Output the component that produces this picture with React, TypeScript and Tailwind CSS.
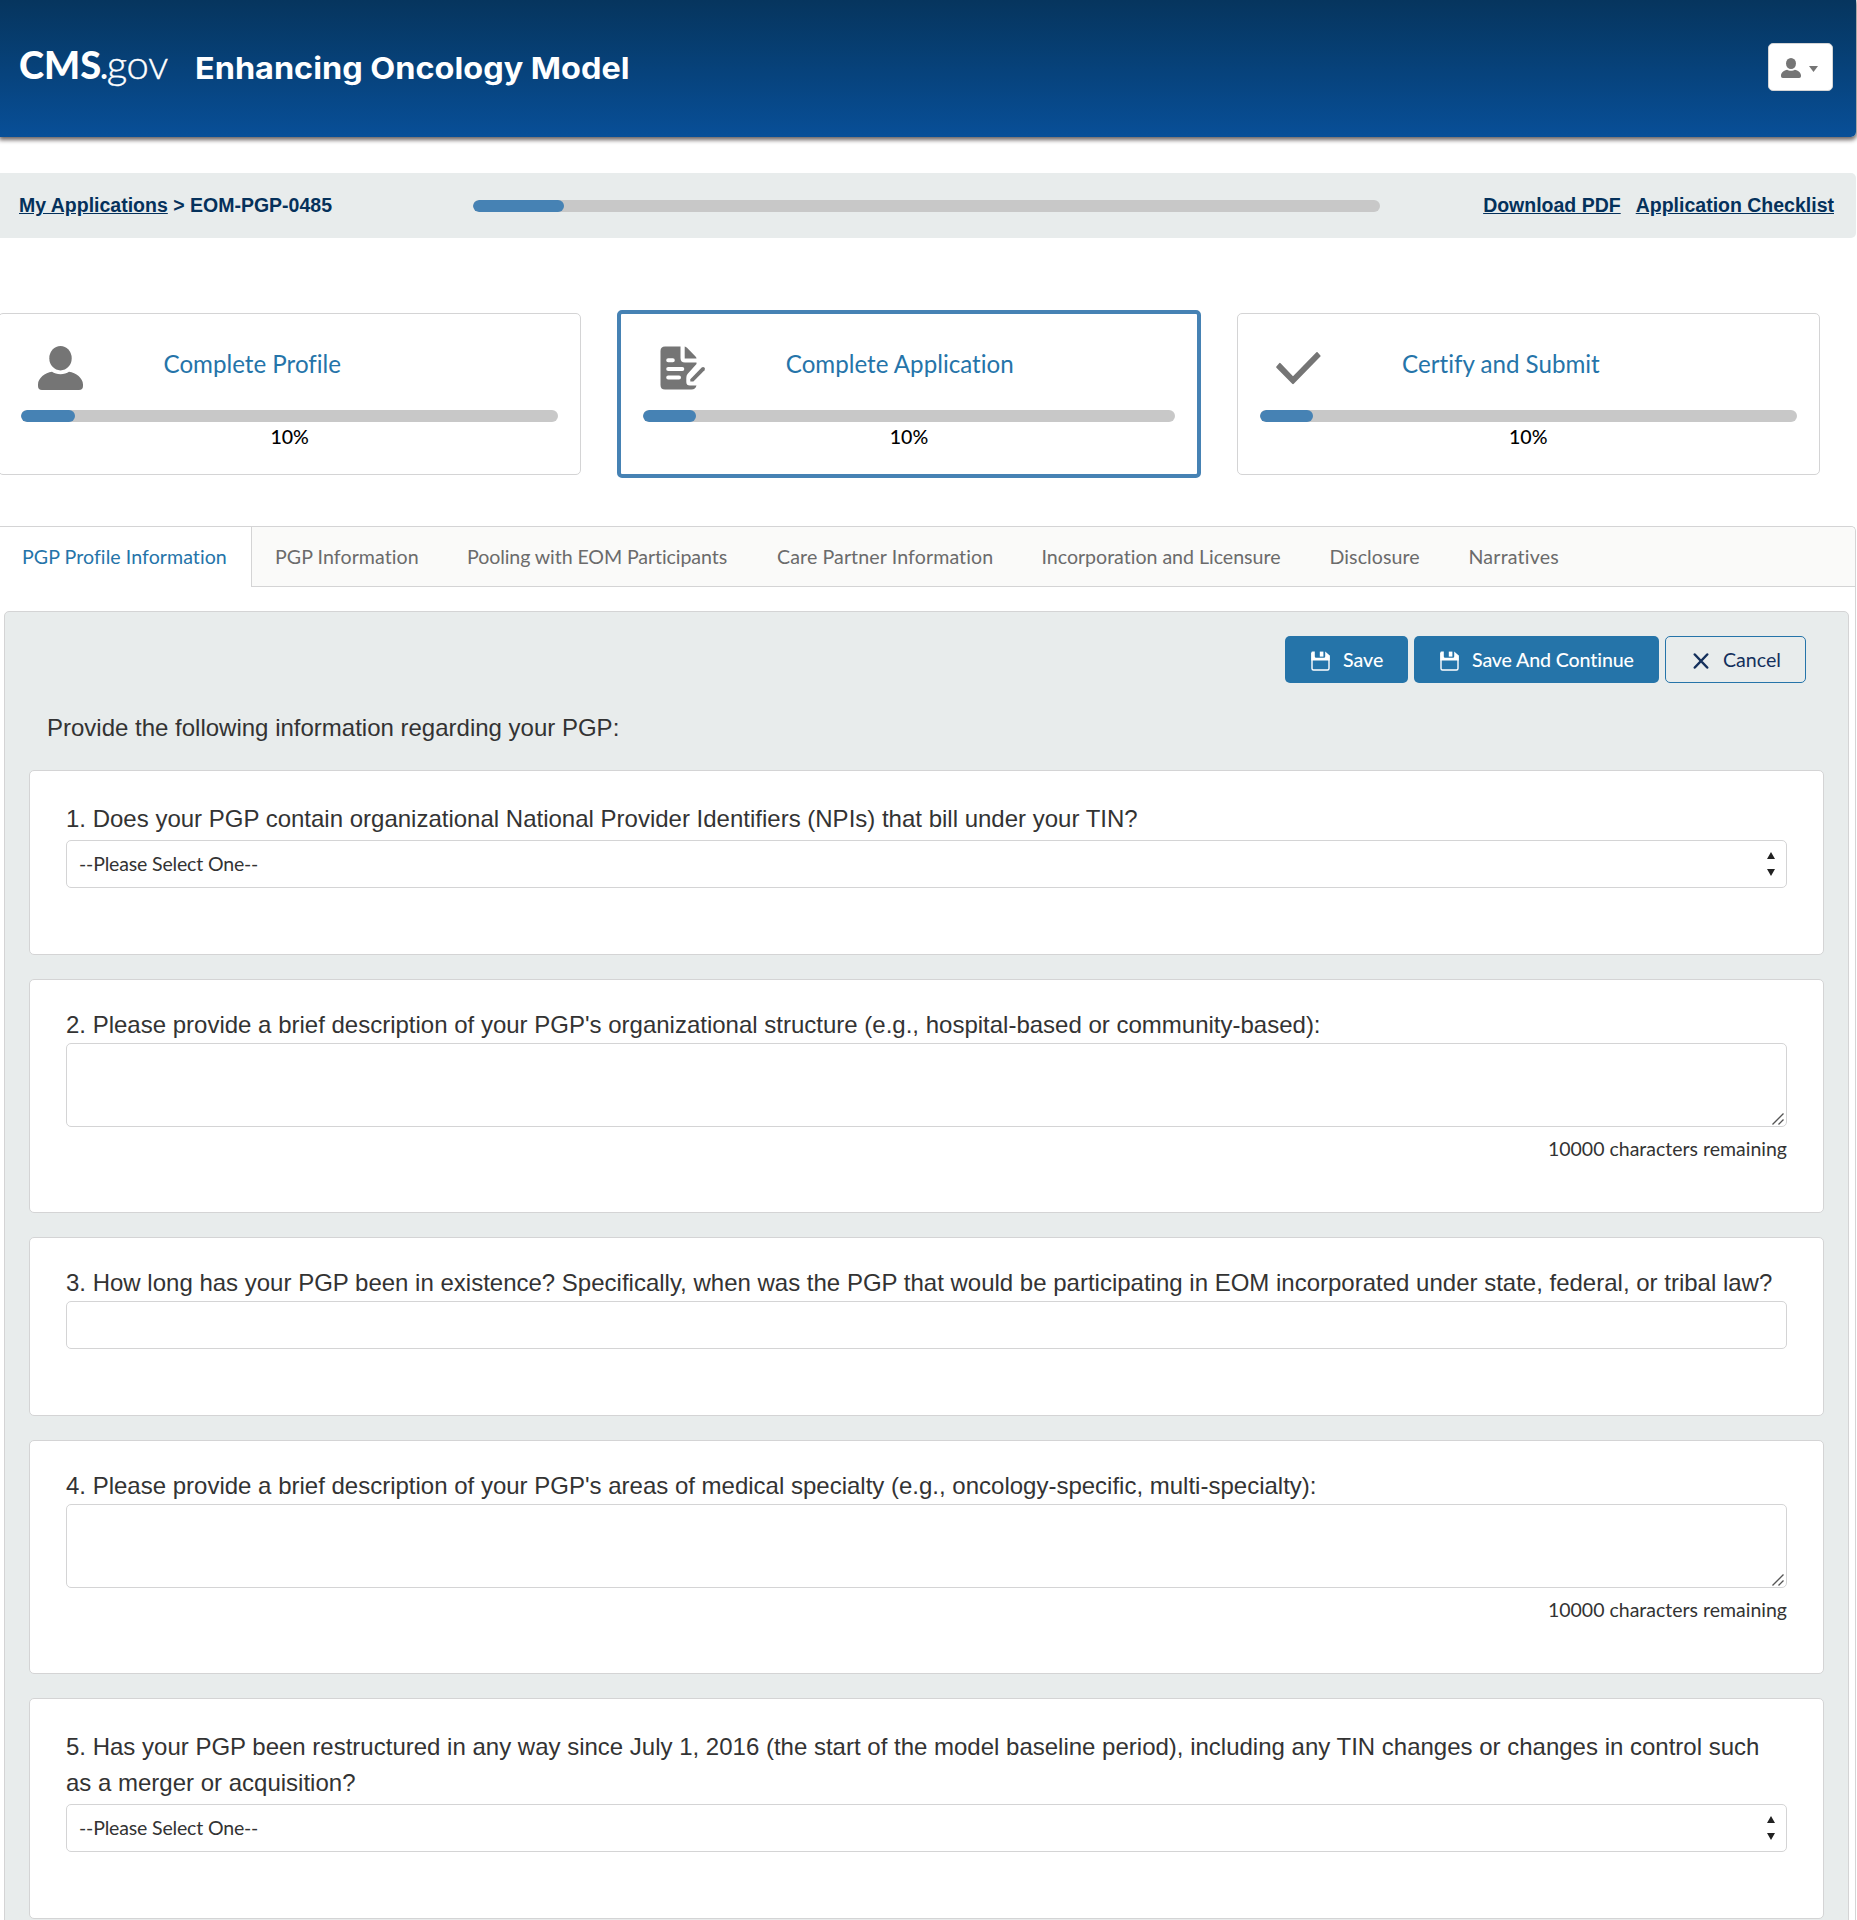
import React from 'react';

const LATO = "font-['Lato',sans-serif]";
const ARIAL = "font-['Liberation_Sans',Arial,sans-serif]";

function UserIcon({ className }: { className: string }) {
  return (
    <svg viewBox="0 0 45 44" className={className} fill="currentColor" preserveAspectRatio="none">
      <ellipse cx="22.5" cy="12.2" rx="11.2" ry="12.2" />
      <path d="M14 25.8 C18 29 27 29 31 25.8 C38 27 45 32 45 38.5 V40 Q45 44 41 44 H4 Q0 44 0 40 V38.5 C0 32 7 27 14 25.8 Z" />
    </svg>
  );
}

function FileEditIcon({ className }: { className: string }) {
  return (
    <svg viewBox="0 0 46 44" className={className}>
      <path
        fill="currentColor"
        d="M5 0.5 H20.5 V12 Q20.5 16.5 25 16.5 H36.5 V18 L27.5 28 Q26.3 29.5 26.3 32 V36 Q26.3 39.5 30 39.5 H36.5 Q35.5 43.5 31.5 43.5 H5 Q0.5 43.5 0.5 39 V5 Q0.5 0.5 5 0.5 Z"
      />
      <path fill="currentColor" d="M24.7 0.5 Q26 0.7 27 1.8 L35.5 10.5 Q36.5 11.5 36.5 12.4 H24.7 Z" />
      <path fill="currentColor" d="M30.3 33.2 L41.7 21.4 Q43.2 20.4 44.4 21.5 Q45.6 22.8 44.5 24.2 L33.4 35.4 L30.3 35.6 Z" />
      <path d="M8.2 14.2 H12.8 M8.2 23 H22.3 M8.2 31.4 H19" stroke="#fff" strokeWidth="4" strokeLinecap="round" />
    </svg>
  );
}

function CheckIcon({ className }: { className: string }) {
  return (
    <svg viewBox="0 0 45 44" className={className} fill="currentColor">
      <path d="M0.4 20.5 L3.4 17.1 Q4 16.6 4.6 17.2 L17 30.3 L40.4 6.2 Q41 5.6 41.6 6.2 L44.4 9.4 Q44.9 10 44.4 10.6 L17.8 37.8 Q17 38.5 16.2 37.8 L0.4 21.7 Q-0.1 21.1 0.4 20.5 Z" />
    </svg>
  );
}

function SaveIcon() {
  return (
    <svg viewBox="0 0 19 20" className="mt-[2px] h-[20px] w-[19px] shrink-0">
      <path d="M1 2 V17.5 Q1 19 2.5 19 H16.5 Q18 19 18 17.5 V4.5" fill="none" stroke="#fff" strokeWidth="1.4" />
      <path
        d="M0.3 2 Q0.3 0.6 1.6 0.6 H3.8 V5.5 Q3.8 6.8 5.1 6.8 H12.9 Q14.2 6.8 14.2 5.5 V0.6 L18.7 4.6 V9.4 H0.3 Z"
        fill="#fff"
      />
      <rect x="8.8" y="0.6" width="3.6" height="5" fill="#fff" />
    </svg>
  );
}

function CloseIcon() {
  return (
    <svg viewBox="0 0 16 16" className="mt-[2px] h-[16px] w-[16px] shrink-0">
      <path d="M1.8 1.5 L14.2 14.5 M14.2 1.5 L1.8 14.5" stroke="#14305c" strokeWidth="2.5" strokeLinecap="round" />
    </svg>
  );
}

function Progress({ className }: { className: string }) {
  return (
    <div className={`h-[12px] overflow-hidden rounded-full bg-[#c8c8c8] ${className}`}>
      <div className="h-full w-1/10 rounded-full bg-[#4682b4]" />
    </div>
  );
}

function StepCard({ title, icon, active }: { title: string; icon: React.ReactNode; active?: boolean }) {
  return (
    <div
      className={`w-[583.3px] shrink-0 rounded-[5px] bg-white px-[22px] pt-[32px] ${
        active ? '-my-[3px] h-[168px] border-4 border-[#4682b4]' : 'h-[162px] border border-[#d4d4d5]'
      }`}
    >
      <div className="flex h-[64px]">
        <div className="w-[142.5px] pl-[16.6px] text-[#757575]">{icon}</div>
        <div className="text-[24.15px] leading-[36px] text-[#2574a9]">{title}</div>
      </div>
      <Progress className="w-full" />
      <div className="text-center text-[19.6px] font-medium leading-[30px] text-black">10%</div>
    </div>
  );
}

function SelectBox() {
  return (
    <div className={`flex h-[48px] items-center justify-between rounded-[5px] border border-[#d4d4d5] pr-[11px] pl-[12px] text-[19.5px] tracking-[-0.16px] text-[#333] ${LATO}`}>
      <span>--Please Select One--</span>
      <svg viewBox="0 0 8 24" className="h-[24px] w-[8px]" fill="#222">
        <path d="M4 0 L8 7 H0 Z M0 17 H8 L4 24 Z" />
      </svg>
    </div>
  );
}

function TextAreaBox() {
  return (
    <>
      <div className="flex h-[84px] items-end justify-end rounded-[5px] border border-[#d4d4d5] pr-[2px] pb-px">
        <svg viewBox="0 0 12 12" className="h-[12px] w-[12px]">
          <path d="M0.5 11.5 L11.5 0.5 M6.5 11.5 L11.5 6.5" stroke="#555" strokeWidth="1.3" />
        </svg>
      </div>
      <div className={`mt-[5px] text-right text-[19.5px] leading-[34px] text-[#333] ${LATO}`}>10000 characters remaining</div>
    </>
  );
}

function Question({ text, kind, height }: { text: string; kind: 'select' | 'textarea' | 'input'; height: string }) {
  const select = kind === 'select';
  return (
    <div className={`mb-[24px] rounded-[5px] border border-[#d4d4d5] bg-white px-[36px] ${height} ${select ? 'pt-[30px]' : 'pt-[27px]'}`}>
      <div className={`text-[24px] leading-[36px] text-[#333] ${ARIAL} ${select ? 'mb-[3px]' : ''}`}>{text}</div>
      {select && <SelectBox />}
      {kind === 'textarea' && <TextAreaBox />}
      {kind === 'input' && <div className="h-[48px] rounded-[5px] border border-[#d4d4d5]" />}
    </div>
  );
}

const tabs = [
  { label: 'PGP Information', style: 'w-[192px] tracking-[0.07px]' },
  { label: 'Pooling with EOM Participants', style: 'w-[310px] tracking-[-0.09px]' },
  { label: 'Care Partner Information', style: 'w-[264.5px] tracking-[0.11px]' },
  { label: 'Incorporation and Licensure', style: 'w-[288px] tracking-[-0.02px]' },
  { label: 'Disclosure', style: 'w-[139px] tracking-[0.08px]' },
  { label: 'Narratives', style: 'tracking-[0.2px]' },
];

export default function App() {
  return (
    <div className={`h-[1920px] w-[1857px] overflow-hidden bg-white pr-px ${LATO} [font-variant-ligatures:no-common-ligatures]`}>
      <header className="flex h-[137px] items-start justify-between rounded-br-[5px] bg-linear-to-b from-[#06355e] to-[#084f98] pr-[23px] pl-[19px] shadow-[0_2px_4px_1px_rgba(60,50,50,0.75)]">
        <div className="flex text-white">
          <div className="mt-[34px] flex w-[176px] items-baseline leading-[60px]">
            <span className="text-[38px] font-black">CMS</span>
            <span className="-ml-px text-[32px] font-bold">.</span>
            <span className="-ml-px text-[40px] font-light tracking-[-0.3px] [-webkit-text-stroke:0.4px_white]">gov</span>
          </div>
          <h1 className="mt-[44px] origin-left scale-x-[1.081] whitespace-nowrap font-['Inter',sans-serif] text-[30px] leading-[48px] font-bold">
            Enhancing Oncology Model
          </h1>
        </div>
        <button className="mt-[43px] flex h-[48px] w-[65px] items-center rounded-[5px] border border-[#d4d4d5] bg-white pl-[12px] text-[#757575]">
          <UserIcon className="mt-[2px] h-[20px] w-[20px]" />
          <svg viewBox="0 0 9 6" className="ml-[8px] mt-[3px] h-[6px] w-[9px]" fill="currentColor">
            <path d="M0 0 H9 L4.5 6 Z" />
          </svg>
        </button>
      </header>

      <div className={`mt-[36px] flex h-[65px] items-center rounded-r-[5px] bg-[#e8ecec] pr-[22px] pl-[19px] text-[19.5px] font-bold text-[#05315b] ${ARIAL}`}>
        <div className="w-[454px]">
          <a className="underline">My Applications</a> &gt; EOM-PGP-0485
        </div>
        <Progress className="mt-px w-[907px]" />
        <div className="ml-auto flex gap-[15px]">
          <a className="underline">Download PDF</a>
          <a className="underline">Application Checklist</a>
        </div>
      </div>

      <div className="-ml-[2px] mt-[75px] flex gap-[36px]">
        <StepCard title="Complete Profile" icon={<UserIcon className="h-[44px] w-[45px]" />} />
        <StepCard title="Complete Application" active icon={<FileEditIcon className="h-[44px] w-[46px]" />} />
        <StepCard title="Certify and Submit" icon={<CheckIcon className="h-[44px] w-[45px]" />} />
      </div>

      <div className="mt-[51px] h-[1394px] rounded-tr-[5px] border-t border-r border-[#d4d4d5]">
        <nav className="flex h-[60px] rounded-tr-[5px] bg-[#fafaf9] text-[19.6px] text-[#6b6b6b]">
          <div className="flex w-[252px] items-center border-r border-[#d4d4d5] bg-white pl-[22px] tracking-[0.06px] text-[#2574a9]">
            PGP Profile Information
          </div>
          <div className="flex flex-1 items-center border-b border-[#d4d4d5] pl-[23px]">
            {tabs.map((tab) => (
              <span key={tab.label} className={`shrink-0 whitespace-nowrap ${tab.style}`}>
                {tab.label}
              </span>
            ))}
          </div>
        </nav>

        <section className="ml-[4px] mr-[6px] mt-[24px] h-[1400px] rounded-t-[5px] border border-[#d4d4d5] bg-[#e8ecec] px-[24px] pt-[24px]">
          <div className="flex justify-end gap-[6px] pr-[18px] text-[19.6px] leading-[24px]">
            <button className="flex h-[47px] w-[123px] items-center gap-[13px] rounded-[5px] bg-[#2574a9] pl-[26px] font-medium text-white">
              <SaveIcon />
              Save
            </button>
            <button className="flex h-[47px] w-[245px] items-center gap-[13px] rounded-[5px] bg-[#2574a9] pl-[26px] font-medium tracking-[-0.12px] whitespace-nowrap text-white">
              <SaveIcon />
              Save And Continue
            </button>
            <button className="flex h-[47px] w-[141px] items-center gap-[14px] rounded-[5px] border border-[#2574a9] pl-[27px] text-[#14305c]">
              <CloseIcon />
              Cancel
            </button>
          </div>
          <p className={`mt-[27px] mb-[24px] pl-[18px] text-[24px] leading-[36px] text-[#333] ${ARIAL}`}>
            Provide the following information regarding your PGP:
          </p>
          <Question kind="select" height="h-[185px]" text="1. Does your PGP contain organizational National Provider Identifiers (NPIs) that bill under your TIN?" />
          <Question kind="textarea" height="h-[234px]" text="2. Please provide a brief description of your PGP's organizational structure (e.g., hospital-based or community-based):" />
          <Question kind="input" height="h-[179px]" text="3. How long has your PGP been in existence? Specifically, when was the PGP that would be participating in EOM incorporated under state, federal, or tribal law?" />
          <Question kind="textarea" height="h-[234px]" text="4. Please provide a brief description of your PGP's areas of medical specialty (e.g., oncology-specific, multi-specialty):" />
          <Question kind="select" height="h-[221px]" text="5. Has your PGP been restructured in any way since July 1, 2016 (the start of the model baseline period), including any TIN changes or changes in control such as a merger or acquisition?" />
        </section>
      </div>
    </div>
  );
}
